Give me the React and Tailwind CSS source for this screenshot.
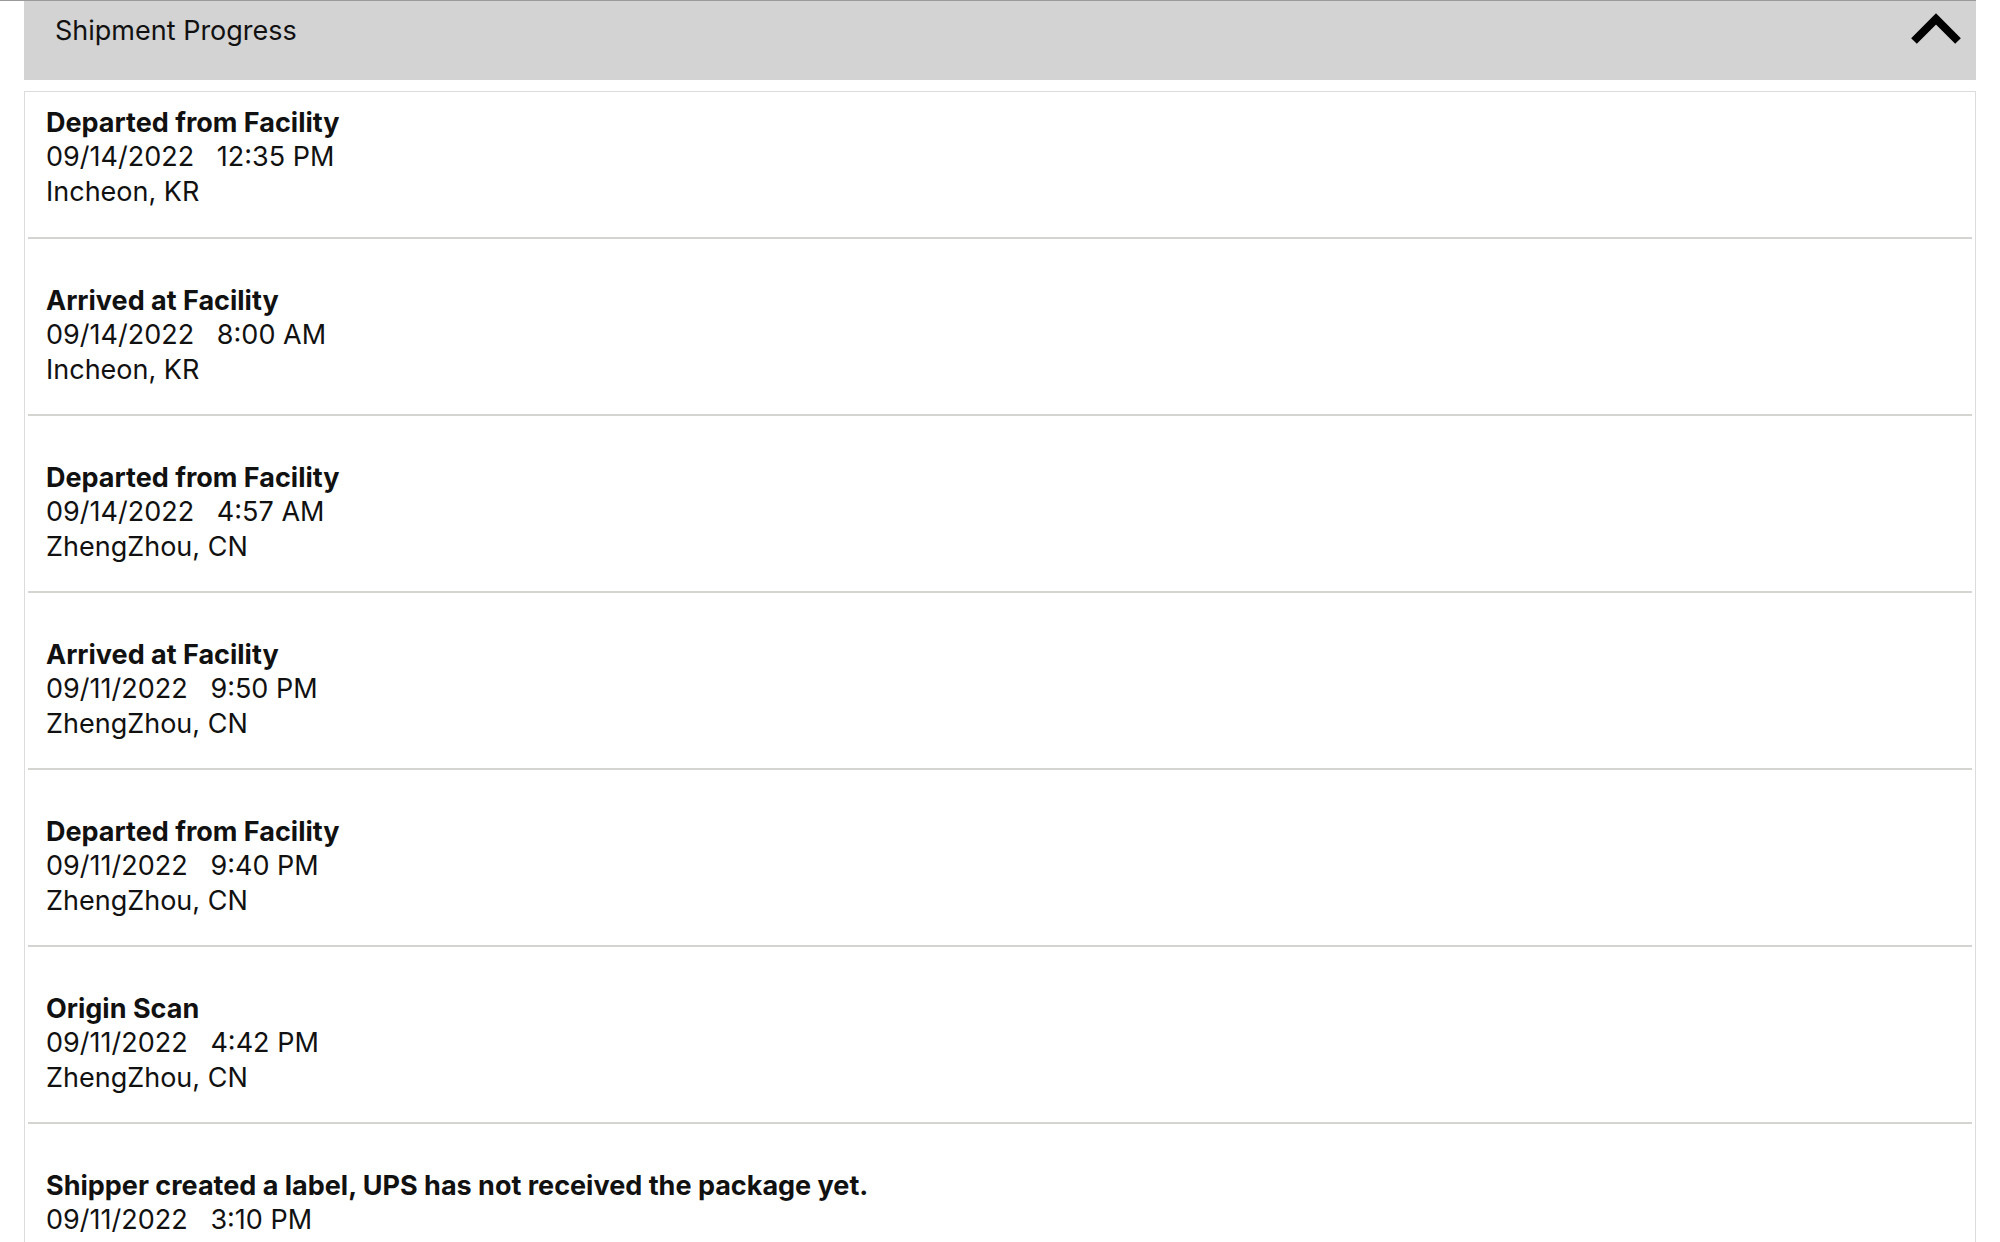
import { Fragment } from "react";

const events = [
  { title: "Departed from Facility", date: "09/14/2022", time: "12:35 PM", place: "Incheon, KR" },
  { title: "Arrived at Facility", date: "09/14/2022", time: "8:00 AM", place: "Incheon, KR" },
  { title: "Departed from Facility", date: "09/14/2022", time: "4:57 AM", place: "ZhengZhou, CN" },
  { title: "Arrived at Facility", date: "09/11/2022", time: "9:50 PM", place: "ZhengZhou, CN" },
  { title: "Departed from Facility", date: "09/11/2022", time: "9:40 PM", place: "ZhengZhou, CN" },
  { title: "Origin Scan", date: "09/11/2022", time: "4:42 PM", place: "ZhengZhou, CN" },
  { title: "Shipper created a label, UPS has not received the package yet.", date: "09/11/2022", time: "3:10 PM", place: "" },
];

// chevron up, thick strokes like the iOS one
function ChevronUp() {
  return (
    <svg width="56" height="40" viewBox="0 0 56 40" className="block">
      <polyline points="6,32 28,10 50,32" fill="none" stroke="#000" strokeWidth="8" strokeLinecap="butt" strokeLinejoin="miter" />
    </svg>
  );
}

export default function App() {
  return (
    <div className="h-[1242px] overflow-hidden bg-white text-[#111] font-['Inter',sans-serif]">
      <div className="border-t border-[#9a9a9a] mr-[24px]" />
      <div className="px-[24px]">
        {/* header */}
        <div className="h-[79px] bg-[#d3d3d3] flex items-start justify-between pl-[31px] pr-[12px] pt-[14px]">
          <span className="text-[27px] leading-[32px]">Shipment Progress</span>
          <div className="-mt-[6px]">
            <ChevronUp />
          </div>
        </div>

        {/* list */}
        <div className="mt-[11px] border border-[#dcdcdc]">
          {events.map((ev, i) => (
            <Fragment key={i}>
              {i > 0 && <div className="mx-[3px] h-[2px] bg-[#d4d4d0]" />}
              <div className={`px-[21px] text-[27px] leading-[34.5px] ${i === 0 ? "pt-[13.5px] pb-[28px]" : "pt-[44.5px] pb-[27px]"}`}>
                <div className="font-bold">{ev.title}</div>
                <div className="whitespace-pre">{ev.date + "   " + ev.time}</div>
                {ev.place && <div>{ev.place}</div>}
              </div>
            </Fragment>
          ))}
        </div>
      </div>
    </div>
  );
}
